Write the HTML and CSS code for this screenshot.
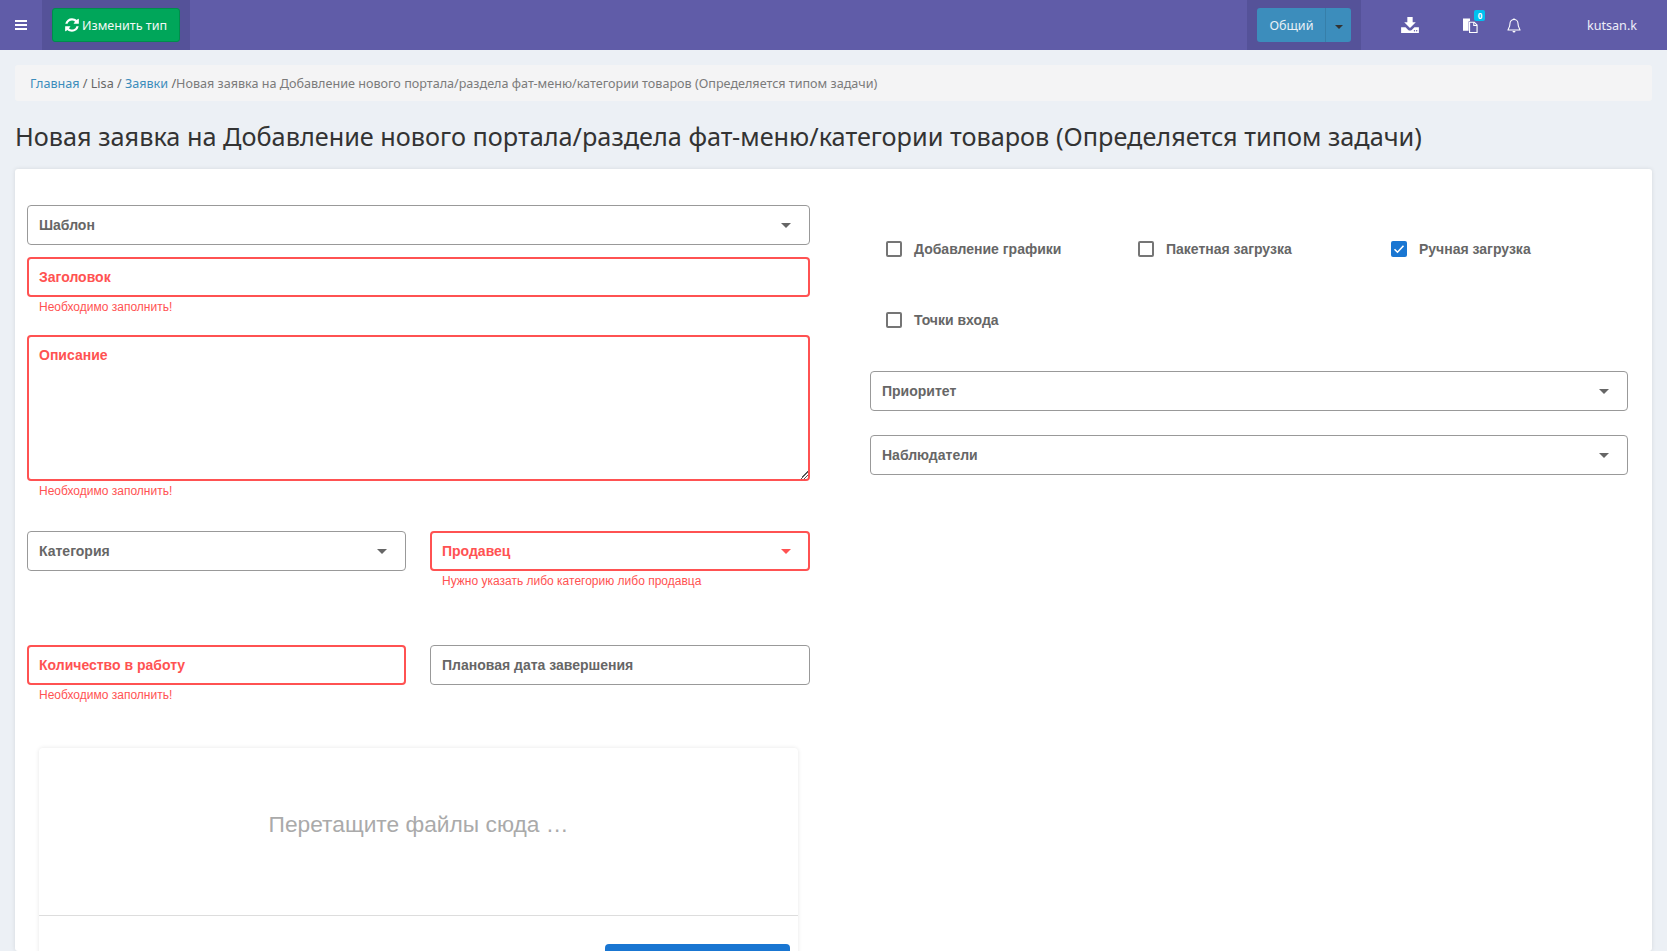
FILE: index.html
```html
<!DOCTYPE html>
<html lang="ru">
<head>
  <meta charset="UTF-8">
  <title>Новая заявка</title>
  <link rel="stylesheet" href="styles.css">
</head>
<body>

  <header class="topbar">
    <a class="burger"><span></span><span></span><span></span></a>
    <div class="bar-block type-block">
      <button class="btn-green">
        <svg class="refresh-icon" viewBox="0 0 1792 1792"><path d="M1639 1056q0 5-1 7-64 268-268 434.500t-478 166.500q-146 0-282.500-55t-243.500-157l-129 129q-19 19-45 19t-45-19-19-45v-448q0-26 19-45t45-19h448q26 0 45 19t19 45-19 45l-137 137q71 66 161 102t187 36q134 0 250-65t186-179q11-17 53-117 8-23 30-23h192q13 0 22.500 9.500t9.500 22.500zm25-800v448q0 26-19 45t-45 19h-448q-26 0-45-19t-19-45 19-45l138-138q-148-137-349-137-134 0-250 65t-186 179q-11 17-53 117-8 23-30 23h-199q-13 0-22.500-9.500t-9.500-22.500v-7q65-268 270-434.500t480-166.500q146 0 284 55.500t245 156.500l130-129q19-19 45-19t45 19 19 45z"/></svg>
        Изменить тип
      </button>
    </div>
    <div class="bar-block group-block">
      <div class="split-btn">
        <span class="split-main">Общий</span>
        <span class="split-arrow"><i class="caret"></i></span>
      </div>
    </div>
    <svg class="icon-download" viewBox="0 0 20 18"><path d="M7 0h6v6h3.500L10 12.500 3.500 6H7z"/><path d="M0 11.500h5l3 3c1 1 3 1 4 0l3-3h5V18H0z"/><circle cx="15" cy="15.500" r=".8" fill="#605ca8"/><circle cx="17.500" cy="15.500" r=".8" fill="#605ca8"/></svg>
    <div class="files">
      <svg class="icon-files" viewBox="0 0 16 15"><path d="M0 0h7.500v3H6v10H0z"/><path d="M7 4h5l3 3v8H7z" fill="#605ca8" stroke="#fff" stroke-width="1.200"/><path d="M11.500 4v3.500H15" fill="none" stroke="#fff" stroke-width="1.200"/></svg>
      <span class="badge">0</span>
    </div>
    <svg class="icon-bell" viewBox="0 0 14 15"><path d="M7 1.500a4 4 0 0 0-4 4c0 4-2 5.500-2 6.500h12c0-1-2-2.500-2-6.500a4 4 0 0 0-4-4z" fill="none" stroke="#fff" stroke-width="1.100"/><path d="M5.500 13a1.500 1.500 0 0 0 3 0zM6.300 1a.7.7 0 0 1 1.400 0v1H6.300z" fill="#fff"/></svg>
    <span class="username">kutsan.k</span>
  </header>

  <nav class="breadcrumb">
    <a>Главная</a> / Lisa / <a>Заявки</a> /<span class="current">Новая заявка на Добавление нового портала/раздела фат-меню/категории товаров (Определяется типом задачи)</span>
  </nav>

  <h1 class="page-title">Новая заявка на Добавление нового портала/раздела фат-меню/категории товаров (Определяется типом задачи)</h1>

  <main class="card">
    <section class="col-left">
      <div class="field select">Шаблон<i class="caret"></i></div>

      <div class="field invalid">Заголовок</div>
      <p class="error">Необходимо заполнить!</p>

      <div class="field area invalid">Описание<span class="grip"></span></div>
      <p class="error">Необходимо заполнить!</p>

      <div class="pair pair-first">
        <div class="field select">Категория<i class="caret"></i></div>
        <div>
          <div class="field select invalid">Продавец<i class="caret"></i></div>
          <p class="error">Нужно указать либо категорию либо продавца</p>
        </div>
      </div>

      <div class="pair pair-second">
        <div>
          <div class="field invalid">Количество в работу</div>
          <p class="error">Необходимо заполнить!</p>
        </div>
        <div class="field">Плановая дата завершения</div>
      </div>

      <div class="dropzone">
        <div class="drop-text">Перетащите файлы сюда …</div>
        <div class="drop-footer"><button class="btn-blue"></button></div>
      </div>
    </section>

    <section class="col-right">
      <div class="checks">
        <label class="check"><i class="box"></i>Добавление графики</label>
        <label class="check"><i class="box"></i>Пакетная загрузка</label>
        <label class="check"><i class="box checked"><svg viewBox="0 0 16 16"><path d="M3.500 8.200l3 3 6-6.500" fill="none" stroke="#fff" stroke-width="1.600"/></svg></i>Ручная загрузка</label>
        <label class="check"><i class="box"></i>Точки входа</label>
      </div>
      <div class="field select">Приоритет<i class="caret"></i></div>
      <div class="field select watchers">Наблюдатели<i class="caret"></i></div>
    </section>
  </main>

</body>
</html>
```

FILE: styles.css
```css
html, body {
  height: 951px;
  overflow: hidden;
}

body {
  margin: 0;
  background-color: #ecf0f5;
  font-family: 'Noto Sans', sans-serif;
  color: #333;
}

/* top bar */
.topbar {
  display: flex;
  align-items: center;
  height: 50px;
  background-color: #605ca8;
  color: #fff;
}

.burger {
  display: flex;
  flex-direction: column;
  justify-content: center;
  gap: 2px;
  width: 12px;
  margin: 0 15px;
}

.burger span {
  height: 2px;
  background-color: #fff;
}

.bar-block {
  display: flex;
  align-items: center;
  height: 50px;
  background-color: #555299;
}

.type-block {
  width: 148px;
  padding-left: 10px;
  box-sizing: border-box;
}

.btn-green {
  display: flex;
  align-items: center;
  gap: 2px;
  width: 128px;
  height: 34px;
  padding: 0 0 0 11px;
  border: 1px solid #008d4c;
  border-radius: 3px;
  background-color: #00a65a;
  color: #f2f8f5;
  font: 12.6px 'Noto Sans', sans-serif;
}

.refresh-icon {
  width: 16px;
  height: 16px;
  fill: #fff;
}

.group-block {
  width: 114px;
  margin-left: auto;
  padding-left: 10px;
  box-sizing: border-box;
}

.split-btn {
  display: flex;
  height: 34px;
  border-radius: 3px;
  background-color: #3c8dbc;
  font-size: 12.6px;
  color: #e8f0f6;
}

.split-main {
  width: 68px;
  line-height: 35px;
  text-align: center;
  border-right: 1px solid #367fa9;
}

.split-arrow {
  display: flex;
  align-items: center;
  justify-content: center;
  width: 25px;
}

.split-arrow .caret {
  position: static;
  border-top: 4px solid #333;
  border-left-width: 4px;
  border-right-width: 4px;
  margin: 3px 0 0;
}

.icon-download {
  width: 18px;
  height: 16px;
  margin-left: 40px;
  fill: #fff;
}

.files {
  position: relative;
  width: 15px;
  height: 15px;
  margin-left: 44px;
}

.icon-files {
  display: block;
  width: 15px;
  height: 15px;
  fill: #fff;
}

.badge {
  position: absolute;
  top: -8px;
  left: 11px;
  width: 11px;
  height: 11px;
  border-radius: 2px;
  background-color: #00c0ef;
  font-size: 8px;
  font-weight: 700;
  line-height: 11px;
  text-align: center;
}

.icon-bell {
  width: 14px;
  height: 15px;
  margin-left: 29px;
}

.username {
  margin: 0 30px 0 65.500px;
  font-size: 12.6px;
  color: #eeeef8;
}

/* breadcrumb and title */
.breadcrumb {
  height: 36px;
  margin: 15px 15px 0;
  padding: 0 15px;
  border-radius: 3px;
  background-color: #f4f4f5;
  font-size: 12.6px;
  line-height: 38px;
  color: #666;
}

.breadcrumb a {
  color: #3c8dbc;
}

.current {
  color: #7b7b7b;
}

.page-title {
  margin: 17px 15px 15px;
  font-size: 25.28px;
  font-weight: 400;
  line-height: 36px;
  color: #333;
}

/* form card */
.card {
  display: grid;
  grid-template-columns: 783px 758px;
  column-gap: 60px;
  height: 782px;
  margin: 0 15px;
  padding: 36px 12px 0 12px;
  box-sizing: border-box;
  overflow: hidden;
  border-radius: 3px;
  background-color: #fff;
  box-shadow: 0 0 4px rgba(0,0,0,0.1);
  font-family: 'Liberation Sans', sans-serif;
}

.field {
  position: relative;
  box-sizing: border-box;
  height: 40px;
  margin-bottom: 12px;
  padding: 0 11px;
  border: 1px solid #999;
  border-radius: 4px;
  font-size: 14px;
  font-weight: 700;
  line-height: 38px;
  color: #666;
}

.field.invalid {
  margin-bottom: 0;
  padding: 0 10px;
  border: 2px solid #ff5252;
  line-height: 36px;
  color: #ff5252;
}

.field.area {
  height: 146px;
  margin-top: 0;
}

.grip {
  position: absolute;
  right: 0;
  bottom: 0;
  width: 8px;
  height: 8px;
  background: linear-gradient(135deg, transparent 50%, #555 50%, #555 58%, transparent 58%, transparent 72%, #555 72%, #555 80%, transparent 80%);
}

.caret {
  position: absolute;
  top: 17px;
  right: 18px;
  width: 0;
  height: 0;
  border-top: 5px solid #666;
  border-left: 5px solid transparent;
  border-right: 5px solid transparent;
}

.invalid .caret {
  top: 16px;
  right: 17px;
  border-top-color: #ff5252;
}

.error {
  height: 20px;
  margin: 0 0 18px;
  padding: 0 12px;
  font-size: 12px;
  line-height: 20px;
  color: #ff5252;
}

.pair {
  display: grid;
  grid-template-columns: 379px 380px;
  column-gap: 24px;
}

.pair-first {
  height: 114px;
  margin-top: 30px;
}

.pair-second {
  height: 103px;
}

.dropzone {
  margin: 0 12px;
  height: 260px;
  border-radius: 4px;
  box-shadow: 0 0 4px rgba(0,0,0,0.1);
}

.drop-text {
  height: 167px;
  padding-top: 0;
  border-bottom: 1px solid #ddd;
  font-size: 22.75px;
  line-height: 152px;
  text-align: center;
  color: #aaa;
}

.drop-footer {
  display: flex;
  justify-content: flex-end;
  padding: 28px 8px 0;
}

.btn-blue {
  width: 185px;
  height: 40px;
  border: 0;
  border-radius: 4px;
  background-color: #1976d2;
}

/* right column */
.checks {
  display: grid;
  grid-template-columns: 252px 253px 1fr;
  grid-auto-rows: 71px;
  height: 166px;
  padding: 20px 0 0 16px;
  box-sizing: border-box;
}

.check {
  display: flex;
  align-items: center;
  gap: 12px;
  height: 47px;
  font-size: 14px;
  font-weight: 700;
  color: #666;
}

.box {
  box-sizing: border-box;
  width: 16px;
  height: 16px;
  border: 2px solid #757575;
  border-radius: 2px;
}

.box.checked {
  border: 0;
  background-color: #1976d2;
}

.box svg {
  display: block;
  width: 16px;
  height: 16px;
}

.watchers {
  margin-top: 24px;
}
```
